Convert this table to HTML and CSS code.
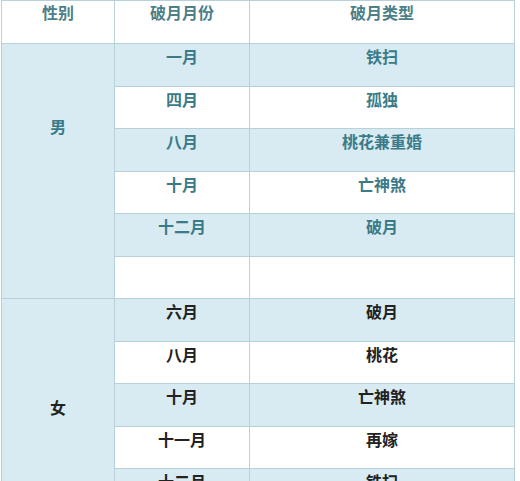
FILE: index.html
```html
<!DOCTYPE html>
<html lang="zh-CN">
<head>
<meta charset="utf-8">
<title>破月</title>
<link rel="stylesheet" href="styles.css">
</head>
<body>
<div class="table">
  <div class="cell head">性别</div>
  <div class="cell head">破月月份</div>
  <div class="cell head">破月类型</div>

  <div class="cell gender male g-male">男</div>
  <div class="cell blue male">一月</div><div class="cell blue male">铁扫</div>
  <div class="cell white male">四月</div><div class="cell white male">孤独</div>
  <div class="cell blue male">八月</div><div class="cell blue male">桃花兼重婚</div>
  <div class="cell white male">十月</div><div class="cell white male">亡神煞</div>
  <div class="cell blue male">十二月</div><div class="cell blue male">破月</div>
  <div class="cell white male"></div><div class="cell white male"></div>

  <div class="cell gender female g-female">女</div>
  <div class="cell blue female">六月</div><div class="cell blue female">破月</div>
  <div class="cell white female">八月</div><div class="cell white female">桃花</div>
  <div class="cell blue female">十月</div><div class="cell blue female">亡神煞</div>
  <div class="cell white female">十一月</div><div class="cell white female">再嫁</div>
  <div class="cell blue female">十二月</div><div class="cell blue female">铁扫</div>
</div>
</body>
</html>
```
FILE: styles.css
```css
html, body {
  margin: 0;
  padding: 0;
  background: #ffffff;
}
body {
  font-family: "Noto Sans CJK SC", sans-serif;
  font-size: 16px;
  line-height: 20px;
  font-weight: 700;
}
.table {
  margin-left: 1px;
  width: 514px;
  box-sizing: border-box;
  display: grid;
  grid-template-columns: 112px 134px 264px;
  grid-auto-rows: 41.5px;
  grid-template-rows: 42px;
  gap: 1px;
  padding: 1px;
  background: #b8d1d8;
}
.cell {
  text-align: center;
  padding-top: 2px;
  box-sizing: border-box;
}
.head {
  background: #ffffff;
  color: #4d7f89;
  padding-top: 1px;
}
.blue { background: #d8ebf2; }
.white { background: #ffffff; }
.male { color: #3b7b89; }
.female { color: #222222; }
.gender {
  background: #d8ebf2;
  grid-column: 1;
}
.g-male {
  grid-row: 2 / span 6;
  padding-top: 72px;
}
.g-female {
  grid-row: 8 / span 5;
  padding-top: 98px;
}
```
